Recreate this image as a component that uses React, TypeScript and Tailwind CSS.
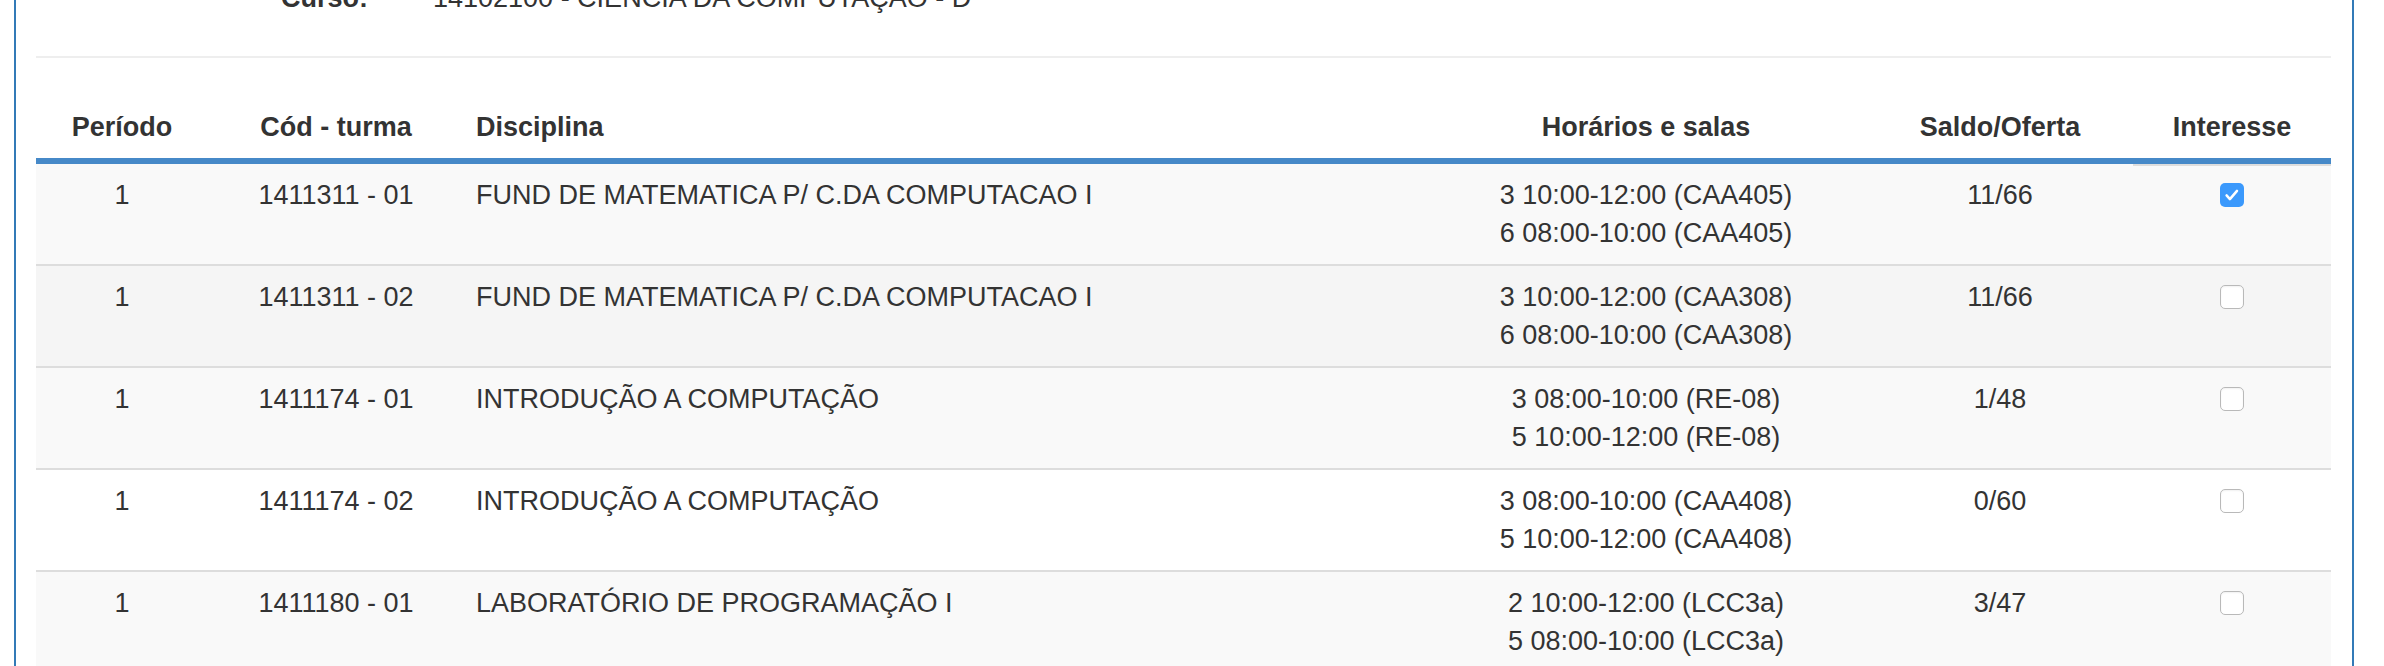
type Turma = {
  periodo: string;
  cod: string;
  disciplina: string;
  horarios: string[];
  saldo: string;
  interesse: boolean;
  bg: string;
};

const turmas: Turma[] = [
  {
    periodo: '1',
    cod: '1411311 - 01',
    disciplina: 'FUND DE MATEMATICA P/ C.DA COMPUTACAO I',
    horarios: ['3 10:00-12:00 (CAA405)', '6 08:00-10:00 (CAA405)'],
    saldo: '11/66',
    interesse: true,
    bg: 'bg-[#f9f9f9]',
  },
  {
    periodo: '1',
    cod: '1411311 - 02',
    disciplina: 'FUND DE MATEMATICA P/ C.DA COMPUTACAO I',
    horarios: ['3 10:00-12:00 (CAA308)', '6 08:00-10:00 (CAA308)'],
    saldo: '11/66',
    interesse: false,
    bg: 'bg-[#f5f5f5]',
  },
  {
    periodo: '1',
    cod: '1411174 - 01',
    disciplina: 'INTRODUÇÃO A COMPUTAÇÃO',
    horarios: ['3 08:00-10:00 (RE-08)', '5 10:00-12:00 (RE-08)'],
    saldo: '1/48',
    interesse: false,
    bg: 'bg-[#f9f9f9]',
  },
  {
    periodo: '1',
    cod: '1411174 - 02',
    disciplina: 'INTRODUÇÃO A COMPUTAÇÃO',
    horarios: ['3 08:00-10:00 (CAA408)', '5 10:00-12:00 (CAA408)'],
    saldo: '0/60',
    interesse: false,
    bg: 'bg-white',
  },
  {
    periodo: '1',
    cod: '1411180 - 01',
    disciplina: 'LABORATÓRIO DE PROGRAMAÇÃO I',
    horarios: ['2 10:00-12:00 (LCC3a)', '5 08:00-10:00 (LCC3a)'],
    saldo: '3/47',
    interesse: false,
    bg: 'bg-[#f9f9f9]',
  },
];

function Checkbox({ checked }: { checked: boolean }) {
  if (checked) {
    return (
      <span className="flex h-6 w-6 items-center justify-center rounded-[5px] bg-[#3b99fc]">
        <svg viewBox="0 0 24 24" className="h-5 w-5" fill="none">
          <path d="M5.5 12.5l4 4.5 8.5-10" stroke="white" strokeWidth="3" strokeLinecap="round" strokeLinejoin="round" />
        </svg>
      </span>
    );
  }
  return <span className="block h-6 w-6 rounded-[5px] border border-[#b9b9b9] bg-white shadow-[inset_0_1px_2px_rgba(0,0,0,0.06)]" />;
}

export default function App() {
  const th = 'px-3 pt-3 pb-3 font-bold align-bottom border-b-[6px] border-[#4689c8]';

  return (
    <div className="h-[666px] overflow-hidden bg-white font-['Liberation_Sans',Arial,sans-serif] text-[27px] leading-[38px] text-[#333]">
      <div className="flow-root ml-[14px] h-[666px] w-[2340px] border-x-2 border-[#337ab7] pl-[20px] pr-[21px]">
        {/* Curso */}
        <div className="-mt-[21px] flex h-[38px]">
          <div className="w-[332px] text-right font-bold">Curso:</div>
          <div className="ml-[65px]">14102100 - CIÊNCIA DA COMPUTAÇÃO - D</div>
        </div>

        <div className="mt-[39px] h-[2px] bg-[#eee]" />

        <table className="mt-[38px] w-full table-fixed border-separate border-spacing-0">
          <colgroup>
            <col className="w-[172px]" />
            <col className="w-[256px]" />
            <col className="w-[961px]" />
            <col className="w-[442px]" />
            <col className="w-[266px]" />
            <col className="w-[198px]" />
          </colgroup>
          <thead>
            <tr>
              <th className={`${th} text-center`}>Período</th>
              <th className={`${th} text-center`}>Cód - turma</th>
              <th className={`${th} text-left`}>Disciplina</th>
              <th className={`${th} text-center`}>Horários e salas</th>
              <th className={`${th} text-center`}>Saldo/Oferta</th>
              <th className={`${th} text-center`}>Interesse</th>
            </tr>
          </thead>
          <tbody>
            {turmas.map((t, i) => {
              const cell = `px-3 py-3 align-top font-normal ${i > 0 ? 'border-t-2 border-[#ddd]' : ''}`;
              return (
                <tr key={t.cod} className={t.bg}>
                  <td className={`${cell} text-center`}>{t.periodo}</td>
                  <td className={`${cell} text-center`}>{t.cod}</td>
                  <td className={`${cell} text-left`}>{t.disciplina}</td>
                  <td className={`${cell} text-center`}>
                    {t.horarios.map((h) => (
                      <div key={h}>{h}</div>
                    ))}
                  </td>
                  <td className={`${cell} text-center`}>{t.saldo}</td>
                  <td className={`px-3 pb-3 align-top border-t-2 border-[#ddd] ${i > 0 ? 'pt-3' : 'pt-[10px]'}`}>
                    <div className="flex h-[38px] items-center justify-center">
                      <Checkbox checked={t.interesse} />
                    </div>
                  </td>
                </tr>
              );
            })}
          </tbody>
        </table>
      </div>
    </div>
  );
}
